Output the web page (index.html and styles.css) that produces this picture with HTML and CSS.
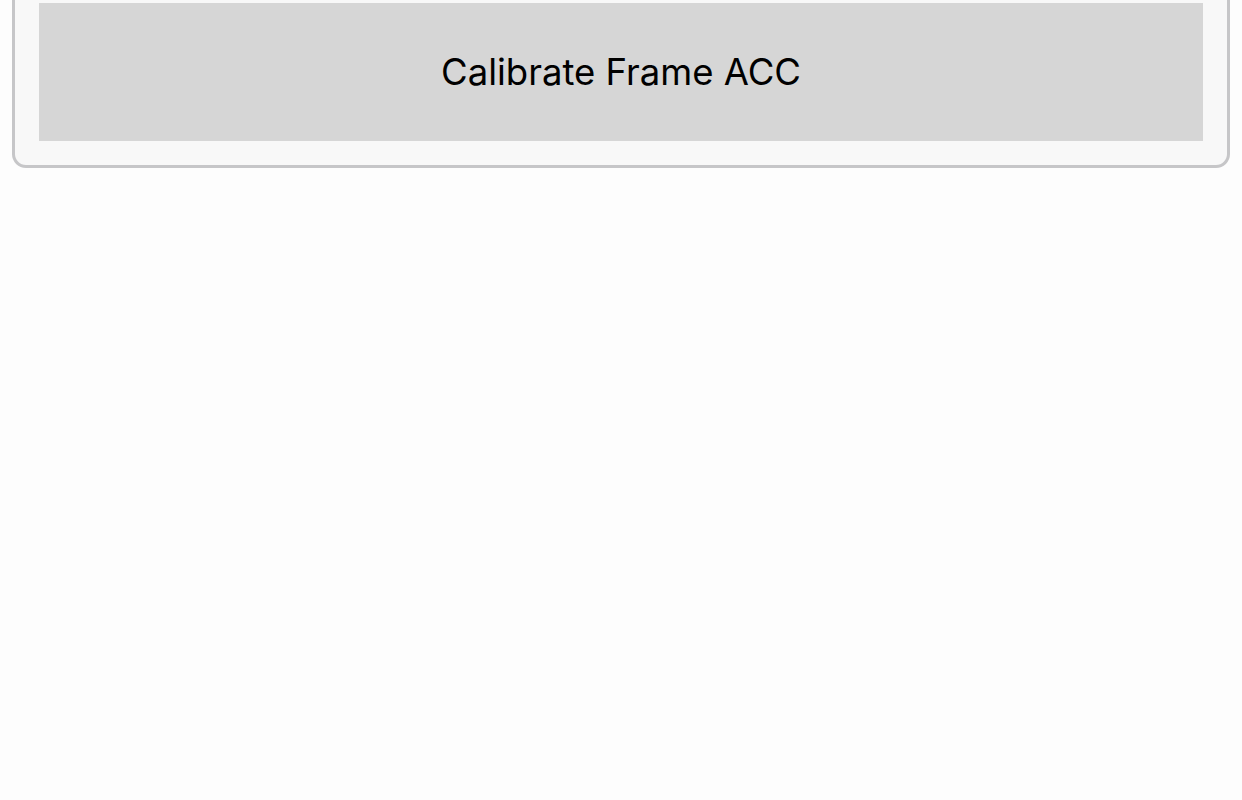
FILE: index.html
```html
<!DOCTYPE html>
<html>
<head>
<meta charset="utf-8">
<link rel="stylesheet" href="styles.css">
</head>
<body>
<div class="page">
  <div class="panel">
    <button class="action">Calibrate Frame ACC</button>
  </div>
</div>
</body>
</html>
```
FILE: styles.css
```css
html, body {
  margin: 0;
  padding: 0;
  background: #fdfdfd;
}
.page {
  height: 800px;
  overflow: hidden;
  padding: 0 12px;
}
.panel {
  margin-top: -30px;
  border: 3px solid #c6c6c8;
  border-radius: 14px;
  background: #f8f8f8;
  padding: 30px 24px 24px;
  display: flex;
}
.action {
  flex: 1;
  height: 138px;
  border: none;
  margin: 0;
  background: #d6d6d6;
  color: #000;
  font-family: Inter, "Noto Sans", sans-serif;
  font-size: 36.5px;
  font-weight: 400;
  padding: 0;
}
```
